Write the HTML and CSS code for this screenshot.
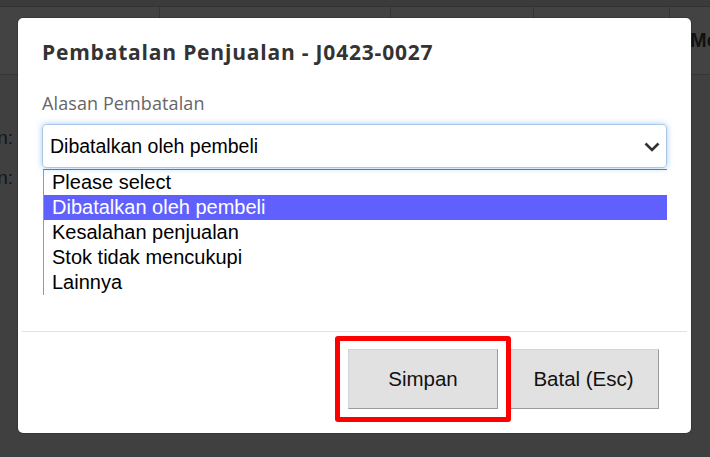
FILE: index.html
```html
<!DOCTYPE html>
<html lang="id">
<head>
  <meta charset="UTF-8">
  <title>Pembatalan Penjualan</title>
  <link rel="stylesheet" href="styles.css">
</head>
<body>
  <div class="page">
    <div class="topbar"></div>
    <div class="tabs">
      <div class="tab t1"></div>
      <div class="tab t2"></div>
      <div class="tab t3"></div>
      <div class="tab t4"></div>
      <div class="tab t5">Metode</div>
    </div>
    <div class="rows">
      <div class="row"><span class="row-label">Pelanggan:</span></div>
      <div class="row"><span class="row-label">Keterangan:</span></div>
    </div>
  </div>

  <div class="modal">
    <div class="modal-header">
      <h4 class="modal-title">Pembatalan Penjualan - J0423-0027</h4>
    </div>
    <div class="modal-body">
      <label class="field-label">Alasan Pembatalan</label>
      <div class="select">
        <span>Dibatalkan oleh pembeli</span>
        <svg class="chevron" width="16" height="10" viewBox="0 0 16 10">
          <path d="M1.5 1.5 L8 8 L14.5 1.5" fill="none" stroke="#333" stroke-width="2.6"/>
        </svg>
      </div>
      <ul class="options">
        <li>Please select</li>
        <li class="selected">Dibatalkan oleh pembeli</li>
        <li>Kesalahan penjualan</li>
        <li>Stok tidak mencukupi</li>
        <li>Lainnya</li>
      </ul>
    </div>
    <div class="modal-footer">
      <button class="btn btn-save">Simpan</button>
      <button class="btn">Batal (Esc)</button>
    </div>
  </div>
</body>
</html>
```

FILE: styles.css
```css
body {
  margin: 0;
  height: 457px;
  overflow: hidden;
  background: #404040;
  font-family: "Liberation Sans", Arial, sans-serif;
}

/* dimmed page behind the dialog */
.topbar {
  height: 6px;
  background: #3b3b3b;
  border-bottom: 1px solid #333;
}
.tabs {
  display: flex;
  height: 67px;
  background: #434343;
  border-bottom: 1px solid #363636;
}
.tab {
  border-right: 1px solid #363636;
}
.t1 { width: 159px; }
.t2 { width: 230px; }
.t3 { width: 142px; }
.t4 { width: 135px; }
.t5 {
  flex: 1;
  border-right: 0;
  padding: 22px 0 0 20px;
  font-size: 20px;
  font-weight: bold;
  color: #111;
  white-space: nowrap;
  overflow: hidden;
}
.rows {
  padding-top: 52px;
}
.row {
  height: 40px;
}
.row-label {
  display: flex;
  justify-content: flex-end;
  width: 13px;
  overflow: hidden;
  white-space: nowrap;
  font-size: 19px;
  color: #151515;
}

/* dialog */
.modal {
  position: absolute;
  left: 18px;
  top: 18px;
  width: 673px;
  height: 415px;
  background: #fff;
  border-radius: 5px;
  box-shadow: 0 0 0 1px rgba(0,0,0,0.15);
}
.modal-header {
  padding: 20px 24px 0;
}
.modal-title {
  margin: 0;
  font-family: "Open Sans", sans-serif;
  font-size: 21px;
  line-height: 28px;
  letter-spacing: 0.8px;
  font-weight: bold;
  color: #333;
}
.modal-body {
  padding: 25px 24px 0;
}
.field-label {
  display: block;
  font-family: "Open Sans", sans-serif;
  font-size: 18px;
  line-height: 24px;
  letter-spacing: 0.1px;
  color: #666;
  margin-bottom: 9px;
}
.select {
  display: flex;
  align-items: center;
  justify-content: space-between;
  height: 42px;
  padding: 0 6px 0 7px;
  border: 1px solid #a9c8e6;
  border-radius: 4px;
  box-shadow: 0 0 6px rgba(102,175,233,0.6);
  font-size: 19.5px;
  color: #000;
}
.chevron {
  margin-top: 1px;
}
.options {
  list-style: none;
  margin: 1px 0 0 1px;
  padding: 0;
  border-top: 1px solid #777;
  border-left: 1px solid #999;
  font-size: 20px;
  color: #000;
}
.options li {
  height: 25px;
  line-height: 24px;
  padding-left: 8px;
}
.options .selected {
  background: #6060ff;
  color: #fff;
}
.modal-footer {
  display: flex;
  justify-content: flex-end;
  gap: 10px;
  margin: 36px 4px 0;
  padding: 17px 28px 24px;
  border-top: 1px solid #e2e2e2;
}
.btn {
  width: 151px;
  height: 60px;
  background: #e1e1e1;
  border: 1px solid;
  border-color: #d4d4d4 #9a9a9a #9a9a9a #d4d4d4;
  font-family: "Liberation Sans", Arial, sans-serif;
  font-size: 20.5px;
  color: #111;
}
.btn-save {
  position: relative;
  width: 150px;
}
.btn-save::after {
  content: "";
  position: absolute;
  inset: -14px;
  border: 5px solid #f00;
  border-radius: 3px;
}
```
